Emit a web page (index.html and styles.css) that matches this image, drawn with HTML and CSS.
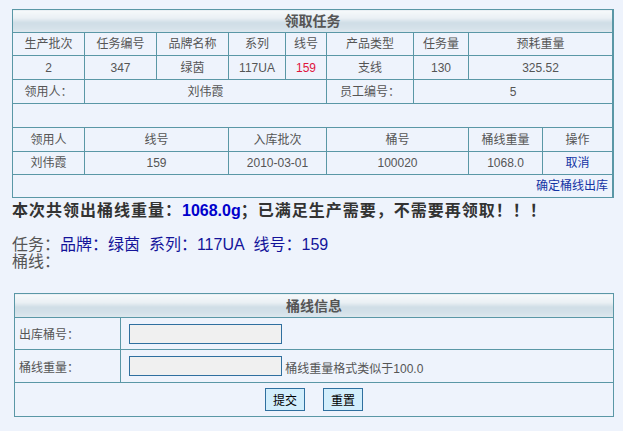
FILE: index.html
```html
<!DOCTYPE html>
<html lang="zh-CN">
<head>
<meta charset="utf-8">
<title>领取任务</title>
<link rel="stylesheet" href="styles.css">
</head>
<body>
<div class="task-box">
  <table class="grid">
    <colgroup>
      <col class="c72"><col class="c72"><col class="c72"><col class="c57"><col class="c41"><col class="c87"><col class="c55"><col class="c74"><col class="c70">
    </colgroup>
    <tr class="h23"><td colspan="9" class="title">领取任务</td></tr>
    <tr class="h23"><td>生产批次</td><td>任务编号</td><td>品牌名称</td><td>系列</td><td>线号</td><td>产品类型</td><td>任务量</td><td colspan="2">预耗重量</td></tr>
    <tr class="h24"><td>2</td><td>347</td><td>绿茵</td><td>117UA</td><td class="red">159</td><td>支线</td><td>130</td><td colspan="2">325.52</td></tr>
    <tr class="h24"><td>领用人：</td><td colspan="4">刘伟霞</td><td>员工编号：</td><td colspan="3">5</td></tr>
    <tr class="h24"><td colspan="9"></td></tr>
    <tr class="h24"><td>领用人</td><td colspan="2">线号</td><td colspan="2">入库批次</td><td colspan="2">桶号</td><td>桶线重量</td><td>操作</td></tr>
    <tr class="h23"><td>刘伟霞</td><td colspan="2">159</td><td colspan="2">2010-03-01</td><td colspan="2">100020</td><td>1068.0</td><td class="link">取消</td></tr>
    <tr class="h23"><td colspan="9" class="right link">确定桶线出库</td></tr>
  </table>
</div>
<p class="summary">本次共领出桶线重量：<span class="weight">1068.0g</span>；已满足生产需要，不需要再领取！！！</p>
<div class="task-info">
  <div>任务：<span class="navy">品牌：绿茵&nbsp;&nbsp;系列：117UA&nbsp;&nbsp;线号：159</span></div>
  <div>桶线：</div>
</div>
<table class="form">
  <colgroup><col class="lab"><col></colgroup>
  <tr class="fh"><td colspan="2" class="title">桶线信息</td></tr>
  <tr class="f1"><td class="label">出库桶号：</td><td class="field"><input class="inp" type="text"></td></tr>
  <tr class="f2"><td class="label">桶线重量：</td><td class="field"><input class="inp" type="text"> <span class="hint">桶线重量格式类似于100.0</span></td></tr>
  <tr class="f3"><td colspan="2" class="buttons"><button class="btn" type="button">提交</button><button class="btn" type="button">重置</button></td></tr>
</table>
</body>
</html>
```

FILE: styles.css
```css
body {
  margin: 0;
  background: #eef3fc;
  font-family: "Liberation Sans", "Noto Sans CJK JP", "Noto Sans CJK SC", sans-serif;
  color: #555;
  font-size: 12px;
}
.task-box {
  margin: 9px 0 0 12px;
  width: 601px;
  border-right: 1px solid #5a97a6;
}
.grid {
  border-collapse: collapse;
  table-layout: fixed;
  width: 600px;
}
.grid td {
  border: 1px solid #5a97a6;
  padding: 0;
  text-align: center;
  line-height: 14px;
  color: #555;
  font-size: 12px;
}
.c72 { width: 72px; }
.c57 { width: 57px; }
.c41 { width: 41px; }
.c87 { width: 87px; }
.c55 { width: 55px; }
.c74 { width: 74px; }
.c70 { width: 70px; }
.h23 { height: 23px; }
.h24 { height: 24px; }
.title {
  font-weight: bold;
  font-size: 14px !important;
  color: #555;
  background: linear-gradient(to bottom, #f6f9fb 0%, #eaf0f4 35%, #cfdde6 55%, #d4e1e9 80%, #dfe8ee 100%);
}
.grid .red { color: #e0143c; }
.grid .link { color: #1434a4; }
.grid .right { text-align: right; padding-right: 4px; }
.summary {
  margin: 4px 0 0 12px;
  font-size: 16px;
  line-height: 18px;
  font-weight: bold;
  color: #333;
  letter-spacing: 1px;
}
.weight {
  color: #0000cc;
  letter-spacing: 0;
}
.task-info {
  margin: 16px 0 0 12px;
  font-size: 16px;
  line-height: 17px;
  color: #555;
}
.navy { color: #14149a; }
.form {
  margin: 23px 0 0 14px;
  border-collapse: collapse;
  table-layout: fixed;
  width: 600px;
}
.form td {
  border: 1px solid #5a97a6;
  padding: 0;
  font-size: 12px;
  color: #555;
}
.form .title { text-align: center; height: 23px; line-height: 14px; }
.lab { width: 106px; }
.f1 { height: 32px; }
.f2 { height: 33px; }
.f3 { height: 34px; }
.form .label { padding-left: 4px; }
.form .field { padding-left: 8px; }
.inp {
  width: 153px;
  height: 20px;
  box-sizing: border-box;
  border: 1px solid #2f6f9f;
  background: #f0f0f0;
  margin: 0;
  padding: 0;
  vertical-align: bottom;
}
.hint { font-size: 12px; color: #555; }
.buttons { text-align: center; }
.btn {
  width: 40px;
  height: 23px;
  margin: 0 9px;
  padding: 0;
  border: 1px solid #2f6f9f;
  background: #d2eefc;
  color: #000;
  font-family: "Liberation Sans", "Noto Sans CJK JP", "Noto Sans CJK SC", sans-serif;
  font-size: 12px;
}
```
